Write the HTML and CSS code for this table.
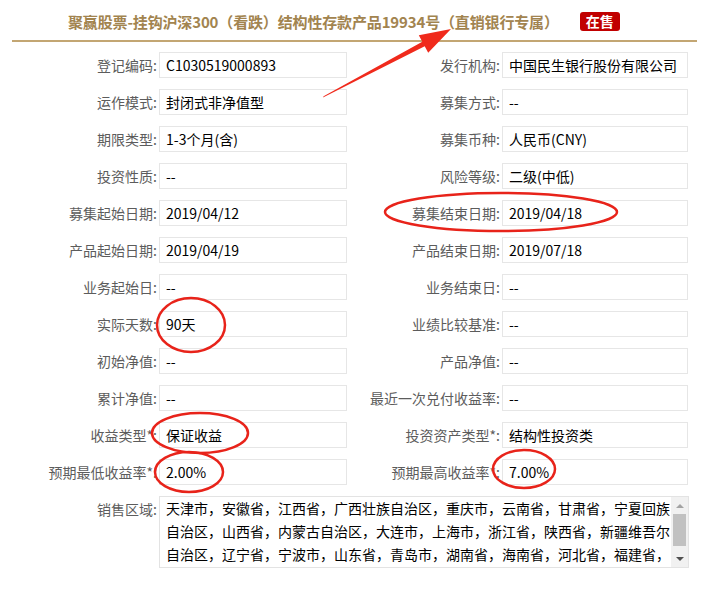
FILE: index.html
```html
<!DOCTYPE html>
<html lang="zh-CN">
<head>
<meta charset="utf-8">
<title>产品详情</title>
<link rel="stylesheet" href="styles.css">
</head>
<body>
<div class="page">
  <div class="header">
    <h1 class="title">聚赢股票-挂钩沪深300（看跌）结构性存款产品19934号（直销银行专属）</h1>
    <span class="badge">在售</span>
  </div>
  <div class="grid">
    <div class="label">登记编码:</div><div class="field">C1030519000893</div>
    <div class="label">发行机构:</div><div class="field">中国民生银行股份有限公司</div>

    <div class="label">运作模式:</div><div class="field">封闭式非净值型</div>
    <div class="label">募集方式:</div><div class="field">--</div>

    <div class="label">期限类型:</div><div class="field">1-3个月(含)</div>
    <div class="label">募集币种:</div><div class="field">人民币(CNY)</div>

    <div class="label">投资性质:</div><div class="field">--</div>
    <div class="label">风险等级:</div><div class="field">二级(中低)</div>

    <div class="label">募集起始日期:</div><div class="field">2019/04/12</div>
    <div class="label">募集结束日期:</div><div class="field">2019/04/18</div>

    <div class="label">产品起始日期:</div><div class="field">2019/04/19</div>
    <div class="label">产品结束日期:</div><div class="field">2019/07/18</div>

    <div class="label">业务起始日:</div><div class="field">--</div>
    <div class="label">业务结束日:</div><div class="field">--</div>

    <div class="label">实际天数:</div><div class="field">90天</div>
    <div class="label">业绩比较基准:</div><div class="field">--</div>

    <div class="label">初始净值:</div><div class="field">--</div>
    <div class="label">产品净值:</div><div class="field">--</div>

    <div class="label">累计净值:</div><div class="field">--</div>
    <div class="label">最近一次兑付收益率:</div><div class="field">--</div>

    <div class="label">收益类型*:</div><div class="field">保证收益</div>
    <div class="label">投资资产类型*:</div><div class="field">结构性投资类</div>

    <div class="label">预期最低收益率*:</div><div class="field">2.00%</div>
    <div class="label">预期最高收益率*:</div><div class="field">7.00%</div>

    <div class="label label-top">销售区域:</div>
    <div class="area">
      <div class="area-text">天津市，安徽省，江西省，广西壮族自治区，重庆市，云南省，甘肃省，宁夏回族<br>自治区，山西省，内蒙古自治区，大连市，上海市，浙江省，陕西省，新疆维吾尔<br>自治区，辽宁省，宁波市，山东省，青岛市，湖南省，海南省，河北省，福建省，</div>
      <div class="scrollbar">
        <div class="sb-btn"><span class="tri-up"></span></div>
        <div class="sb-track"><div class="sb-thumb"></div></div>
        <div class="sb-btn"><span class="tri-down"></span></div>
      </div>
    </div>
  </div>

  <svg class="annot" width="707" height="597" viewBox="0 0 707 597" aria-hidden="true">
    <g fill="none" stroke="#e8231a" stroke-width="2.5">
      <ellipse cx="501" cy="212" rx="116" ry="19"/>
      <ellipse cx="191" cy="325" rx="34" ry="27"/>
      <ellipse cx="200" cy="433" rx="48" ry="20"/>
      <ellipse cx="189" cy="472" rx="34" ry="20"/>
      <ellipse cx="524" cy="469" rx="31" ry="19"/>
    </g>
    <polygon fill="#f02a1c" points="323,97.5 323.6,96.3 422.3,41.8 418.8,35.2 451,29 428.2,52.8 424.7,46.2"/>
  </svg>
</div>
</body>
</html>
```

FILE: styles.css
```css
* { box-sizing: border-box; }
html, body { margin: 0; padding: 0; background: #fff; }
body {
  font-family: "Noto Sans CJK SC", "Noto Sans", sans-serif;
  font-size: 14px;
  color: #000;
}
.page {
  position: relative;
  width: 707px;
  height: 597px;
  overflow: hidden;
}
.header {
  display: flex;
  align-items: center;
  height: 42px;
  margin: 0 10px 0 12px;
  padding: 2px 0 0 56px;
  border-bottom: 2px solid #c3a673;
}
.title {
  margin: 0;
  font-size: 15px;
  font-weight: bold;
  color: #a2844f;
  letter-spacing: -0.15px;
  white-space: nowrap;
}
.badge {
  margin-left: 21px;
  background: #c10000;
  color: #fff;
  font-size: 14px;
  font-weight: bold;
  line-height: 19px;
  padding: 0 6px;
  border-radius: 3px;
}
.grid {
  display: grid;
  grid-template-columns: 159px 188px 155px 186px;
  grid-auto-rows: 26px;
  row-gap: 11px;
  margin-top: 10px;
}
.label {
  text-align: right;
  padding-right: 2px;
  color: #5c5c5c;
  line-height: 26px;
  white-space: nowrap;
}
.field {
  border: 1px solid #e6e6e6;
  padding-left: 6px;
  line-height: 24px;
  white-space: nowrap;
  overflow: hidden;
}
.label-top { align-self: start; line-height: 26px; }
.area {
  grid-column: 2 / 5;
  height: 72px;
  border: 1px solid #e3e3e3;
  display: flex;
  margin-right: -1px;
}
.area-text {
  flex: 1;
  padding: 0 0 0 6px;
  line-height: 23px;
  white-space: nowrap;
  overflow: hidden;
}
.scrollbar {
  width: 17px;
  background: #f1f1f1;
  display: flex;
  flex-direction: column;
}
.sb-btn {
  height: 17px;
  display: flex;
  align-items: center;
  justify-content: center;
}
.sb-track {
  flex: 1;
  padding: 0 2px;
}
.sb-thumb {
  height: 32px;
  background: #c1c1c1;
}
.tri-up, .tri-down {
  width: 0;
  height: 0;
  border-left: 4px solid transparent;
  border-right: 4px solid transparent;
}
.tri-up { border-bottom: 4px solid #a3a3a3; }
.tri-down { border-top: 4px solid #505050; }
.annot {
  position: absolute;
  left: 0;
  top: 0;
  pointer-events: none;
}
```
